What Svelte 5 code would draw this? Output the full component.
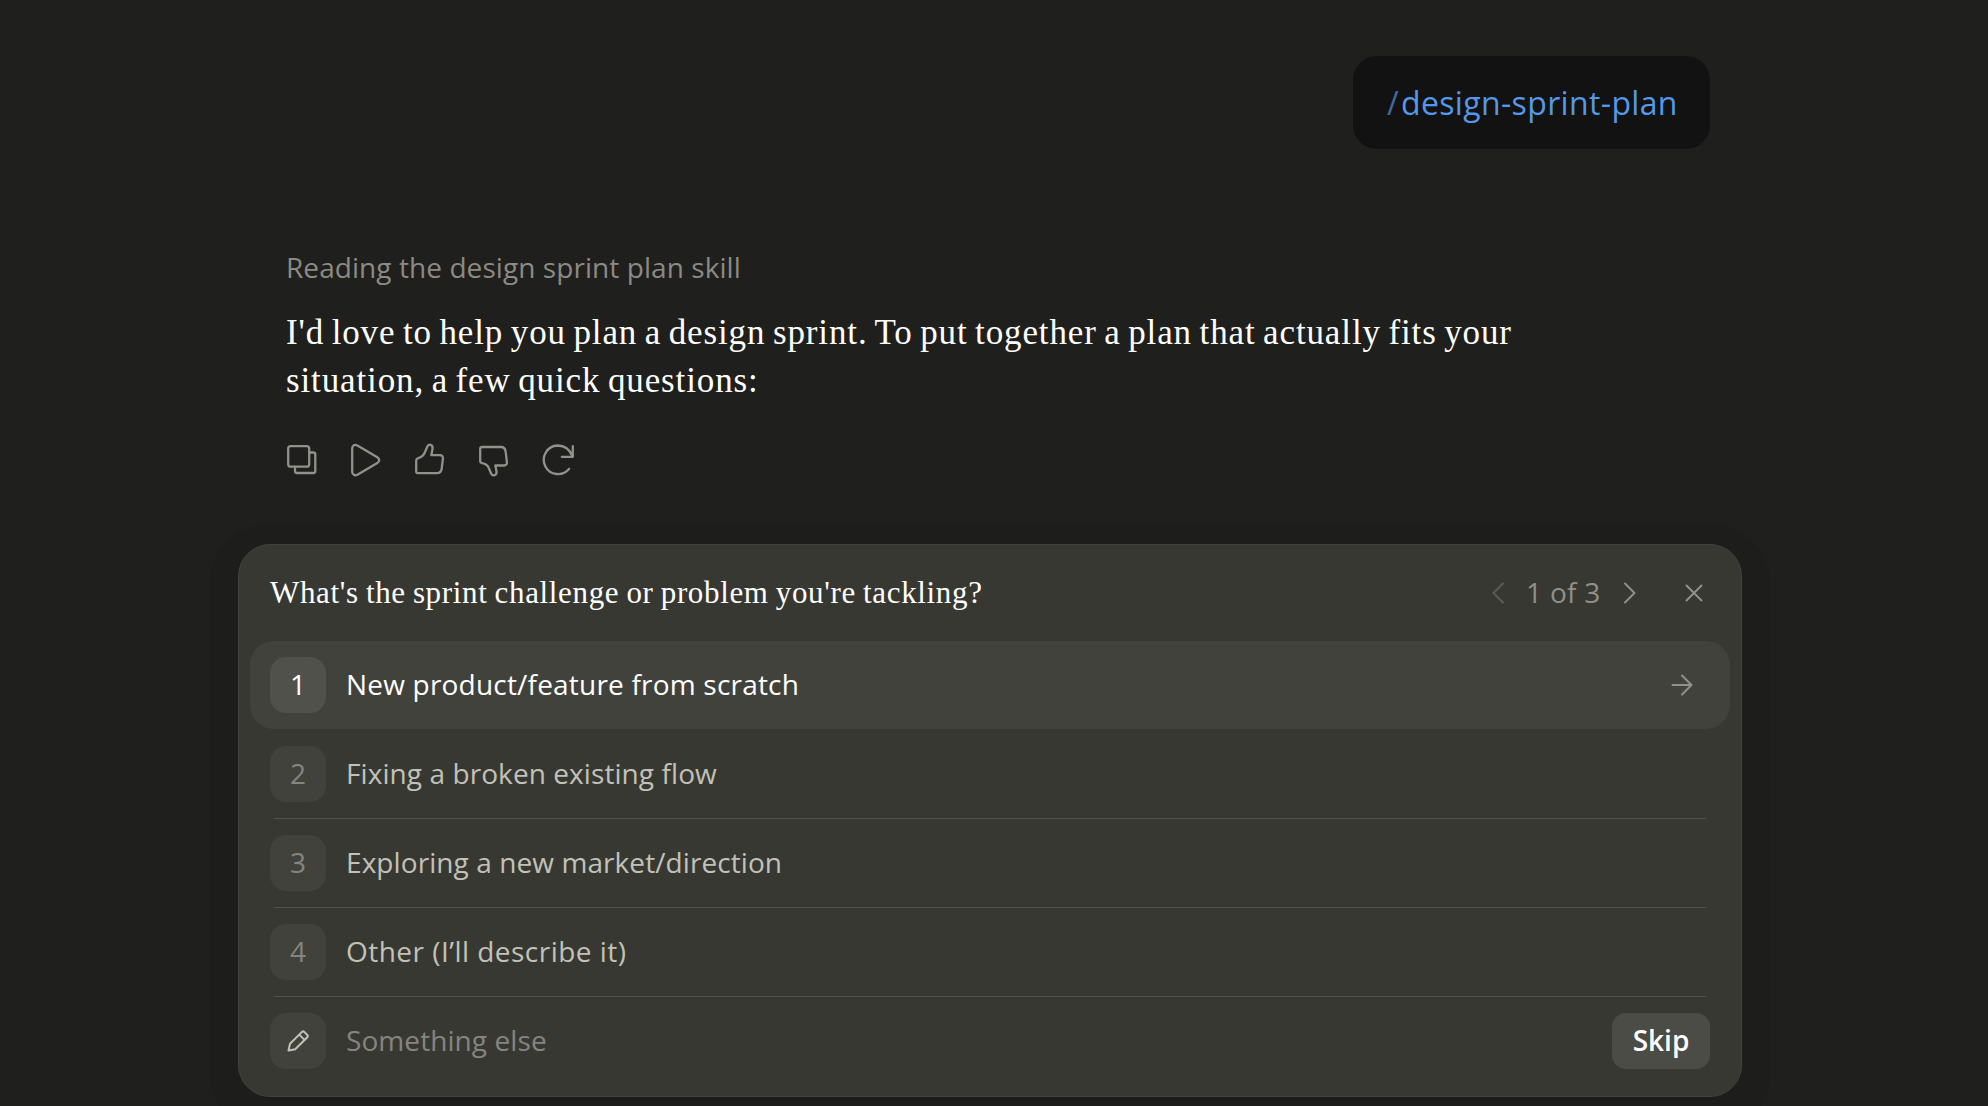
<script>
  const options = [
    'New product/feature from scratch',
    'Fixing a broken existing flow',
    'Exploring a new market/direction',
    'Other (I’ll describe it)'
  ];

  let selected = $state(0);
  let step = $state(1);
  const total = 3;
</script>

<main>
  <div class="user-row">
    <div class="bubble"><span class="slash">/</span><span class="command">design-sprint-plan</span></div>
  </div>

  <section class="reply">
    <p class="status">Reading the design sprint plan skill</p>
    <p class="message">
      I'd love to help you plan a design sprint. To put together a plan that actually fits your<br />
      situation, a few quick questions:
    </p>

    <div class="actions">
      <button aria-label="Copy">
        <svg viewBox="0 0 40 40">
          <rect x="6.2" y="6.2" width="21" height="20.5" rx="2.5" />
          <path d="M27.5 12.500H31.300a2 2 0 0 1 2 2V31a2 2 0 0 1-2 2H15a2 2 0 0 1-2-2V27" />
        </svg>
      </button>
      <button aria-label="Read aloud">
        <svg viewBox="0 0 40 40">
          <path d="M6.200 8.500C6.200 5.500 8.900 4 11.400 5.400L31.300 17.200C33.800 18.700 33.800 21.600 31.300 23.100L11.400 34.700C8.900 36.100 6.200 34.500 6.200 31.700Z" />
        </svg>
      </button>
      <button aria-label="Good response">
        <svg viewBox="0 0 40 40">
          <path d="M8.200 18.200Q13 16.800 14.700 12.800L17 7.200C17.900 4.900 19.200 4.200 20.700 4.900C22.500 5.600 22.900 7 22.500 9L21.300 15.200H30C32.200 15.200 33.100 16.500 32.900 18.600L31.700 28.500C31.300 31.800 29.700 33.200 27 33.200H8.200A2 2 0 0 1 6.200 31.200V20.400Q6.200 18.800 8.200 18.200Z" />
        </svg>
      </button>
      <button aria-label="Bad response">
        <svg viewBox="0 0 40 40">
          <path d="M8.200 23.200Q13 24.200 14.700 27.800L17 33.200C17.900 35.300 19.200 35.700 20.500 35.300C22.300 34.600 22.900 33.200 22.500 31.200L21.300 25.500H30C32.200 25.500 33.100 24.200 32.900 22.100L31.700 11.800C31.300 8.300 29.700 7 27 7H8.200A2 2 0 0 0 6.200 9V21Q6.200 22.700 8.200 23.200Z" />
        </svg>
      </button>
      <button aria-label="Retry">
        <svg viewBox="0 0 40 40">
          <path d="M34.800 6.200V16.800H23.800M34.500 16.400C31.900 9.800 26.800 5.500 19.600 5.500A14.300 14.300 0 1 0 31.200 28.800" />
        </svg>
      </button>
    </div>
  </section>

  <section class="panel">
    <header>
      <h2>What's the sprint challenge or problem you're tackling?</h2>
      <div class="pager">
        <button class="prev" aria-label="Previous" onclick={() => (step = Math.max(1, step - 1))}>
          <svg viewBox="0 0 24 24"><path d="M17 2.500L7.500 12L17 21.500" /></svg>
        </button>
        <span class="count">{step} of {total}</span>
        <button class="next" aria-label="Next" onclick={() => (step = Math.min(total, step + 1))}>
          <svg viewBox="0 0 24 24"><path d="M7 2.500L16.500 12L7 21.500" /></svg>
        </button>
        <button class="close" aria-label="Close">
          <svg viewBox="0 0 24 24"><path d="M4.500 4.500L19.500 19.500M19.500 4.500L4.500 19.500" /></svg>
        </button>
      </div>
    </header>

    <div class="options">
      {#each options as option, i}
        <button class="option" class:selected={selected === i} onclick={() => (selected = i)}>
          <span class="key">{i + 1}</span>
          <span class="label label{i}">{option}</span>
          {#if selected === i}
            <svg class="arrow" viewBox="0 0 24 24"><path d="M2.500 12H21.500M12 2.500L21.500 12L12 21.500" /></svg>
          {/if}
        </button>
        <div class="divider" class:hidden={selected === i}></div>
      {/each}
      <div class="option other">
        <span class="key">
          <svg class="pencil" viewBox="0 0 24 24">
            <path d="M2.500 21.500L4 14.800L15.700 3.100A2 2 0 0 1 18.500 3.100L21.100 5.700A2 2 0 0 1 21.100 8.500L9.200 20.200ZM13.300 5.600L18.500 10.900" />
          </svg>
        </span>
        <span class="label placeholder">Something else</span>
        <button class="skip">Skip</button>
      </div>
    </div>
  </section>
</main>

<style>
  :global(body) {
    background: #1f1f1d;
  }

  main {
    box-sizing: border-box;
    height: 1106px;
    padding: 56px 246px 0 238px;
    overflow: hidden;
    font-family: 'Open Sans', 'Noto Sans', sans-serif;
    font-size: 28px;
    color: #fff;
  }

  button {
    display: flex;
    align-items: center;
    justify-content: center;
    padding: 0;
    border: none;
    background: none;
    color: inherit;
    font: inherit;
    cursor: pointer;
  }

  svg {
    display: block;
    fill: none;
    stroke: currentColor;
    stroke-width: 2;
    stroke-linecap: round;
    stroke-linejoin: round;
  }

  p,
  h2 {
    margin: 0;
    font-weight: 400;
    white-space: nowrap;
  }

  .user-row {
    display: flex;
    justify-content: flex-end;
    padding-right: 32px;
  }

  .bubble {
    display: flex;
    align-items: center;
    box-sizing: border-box;
    width: 357px;
    height: 93px;
    padding-left: 34px;
    border-radius: 24px;
    background: #121212;
    color: #5598e7;
    font-size: 32px;
    white-space: nowrap;
  }

  .slash {
    width: 14px;
    opacity: 0.65;
  }

  .command {
    letter-spacing: 0.35px;
  }

  .reply {
    padding: 94px 48px 0;
  }

  .status {
    height: 48px;
    line-height: 48px;
    letter-spacing: 0.07px;
    color: #8b8a83;
  }

  .message {
    padding-top: 18px;
    font-family: 'Liberation Serif', serif;
    font-size: 35px;
    line-height: 48px;
    letter-spacing: 0.88px;
    word-spacing: -2.1px;
  }

  .actions {
    display: flex;
    gap: 24px;
    margin: 35px 0 0 -4px;
    color: #91908a;
  }

  .actions svg {
    width: 40px;
    height: 40px;
    stroke-width: 2.3;
  }

  .panel {
    box-sizing: border-box;
    height: 553px;
    margin-top: 64px;
    padding: 0 11px;
    border: 1px solid #41413d;
    border-radius: 32px;
    background: #383833;
    box-shadow: 0 8px 0 28px #1d1d1b;
  }

  header {
    display: flex;
    align-items: center;
    justify-content: space-between;
    height: 96px;
    padding: 0 24px 0 20px;
  }

  h2 {
    font-family: 'Liberation Serif', serif;
    font-size: 31px;
    letter-spacing: 0.65px;
    word-spacing: -1.2px;
  }

  .pager {
    display: flex;
    align-items: center;
    color: #908f88;
  }

  .pager svg {
    width: 24px;
    height: 24px;
  }

  .prev {
    margin-right: 16px;
    opacity: 0.4;
  }

  .count {
    width: 76px;
    padding-bottom: 2px;
    letter-spacing: 0.3px;
  }

  .next {
    margin-left: 16px;
  }

  .close {
    margin-left: 40px;
  }

  .option {
    display: flex;
    align-items: center;
    justify-content: flex-start;
    box-sizing: border-box;
    width: 100%;
    height: 88px;
    padding: 0 20px;
    border-radius: 24px;
    color: #c2c1b8;
    text-align: left;
  }

  .option.selected {
    background: #42423d;
    color: #fff;
  }

  .key {
    display: flex;
    align-items: center;
    justify-content: center;
    box-sizing: border-box;
    width: 56px;
    height: 56px;
    margin-right: 20px;
    padding-bottom: 2px;
    border-radius: 16px;
    background: #42423d;
    color: #85847e;
    font-size: 28px;
  }

  .other .key {
    padding-bottom: 0;
  }

  .selected .key {
    background: #51514c;
    color: #fff;
  }

  .label {
    flex: 1;
    padding-bottom: 2px;
    letter-spacing: 0.08px;
    white-space: nowrap;
  }

  .label0 {
    letter-spacing: 0.2px;
  }

  .label3 {
    letter-spacing: 0.47px;
  }

  .arrow {
    width: 24px;
    height: 24px;
    margin-right: 16px;
    color: #91908a;
  }

  .divider {
    height: 1px;
    margin: 0 24px;
    background: #52524c;
  }

  .divider.hidden {
    background: transparent;
  }

  .pencil {
    width: 24px;
    height: 24px;
    color: #c2c1b8;
  }

  .placeholder {
    color: #85847e;
  }

  .skip {
    width: 98px;
    height: 56px;
    padding-bottom: 2px;
    border-radius: 14px;
    background: #4c4c47;
    color: #fff;
    font-weight: 600;
  }
</style>
